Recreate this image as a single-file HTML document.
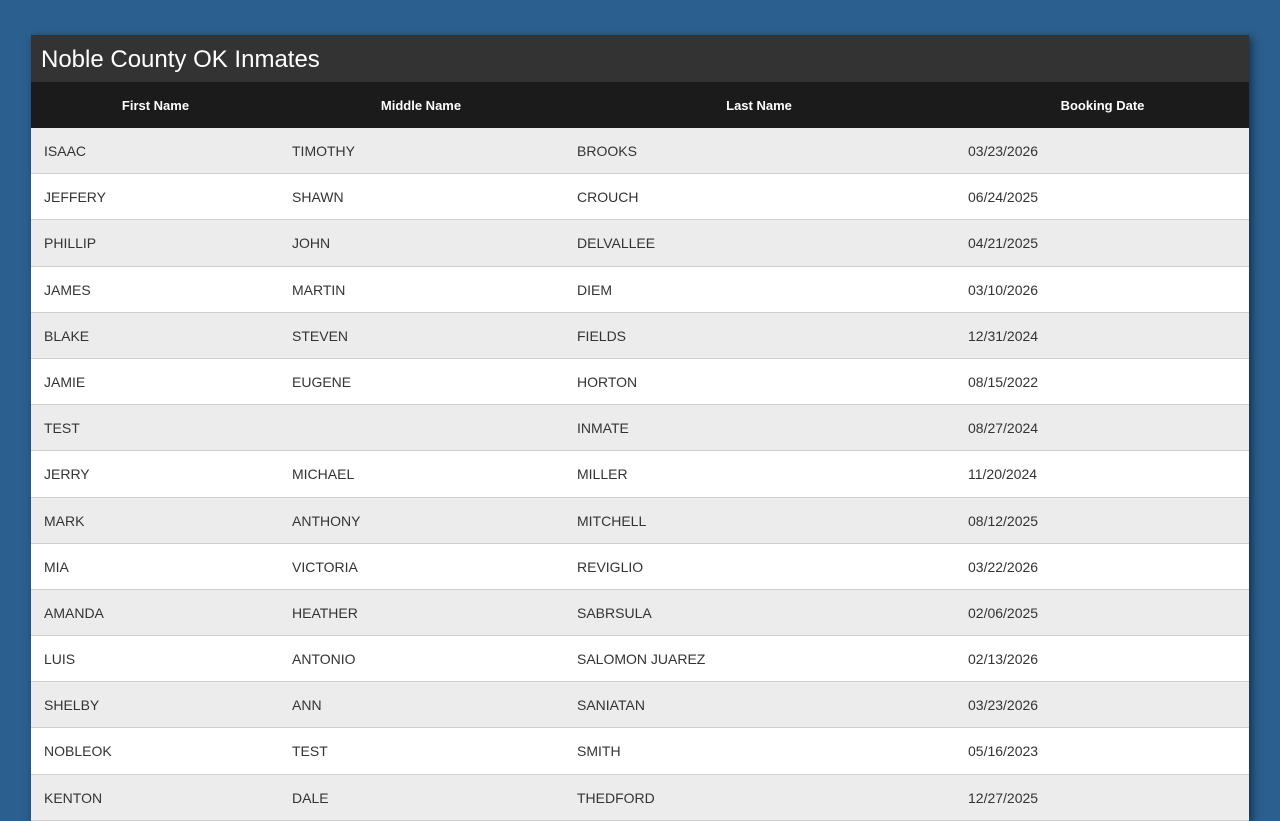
<!DOCTYPE html>
<html><head><meta charset="utf-8"><style>
html,body{margin:0;padding:0;width:1280px;height:800px;overflow:hidden;background:#2a5f8f;font-family:"Liberation Sans",Arial,sans-serif;}
.panel{position:absolute;left:31px;top:35px;width:1218px;background:#fff;box-shadow:3px 3px 8px rgba(0,0,0,0.5);}
.title{height:47px;background:#333;color:#fff;font-size:24px;line-height:50px;padding-left:10px;}
.hdr{height:46px;background:#1b1b1b;color:#fff;font-weight:bold;font-size:13px;position:relative;}
.hdr span{position:absolute;top:1px;line-height:46px;text-align:center;}
.row{height:45.2px;border-bottom:1px solid #cfcfcf;position:relative;font-size:14px;color:#333;background:#fff;}
.row:nth-child(odd){background:#ececec;}
.row span{position:absolute;top:1px;line-height:45px;}
</style></head><body>
<div class="panel">
<div class="title">Noble County OK Inmates</div>
<div class="hdr"><span style="left:0;width:249px">First Name</span><span style="left:249px;width:282px">Middle Name</span><span style="left:531px;width:394px">Last Name</span><span style="left:925px;width:293px">Booking Date</span></div>
<div>
<div class="row"><span style="left:13px">ISAAC</span><span style="left:261px">TIMOTHY</span><span style="left:546px">BROOKS</span><span style="left:937px">03/23/2026</span></div>
<div class="row"><span style="left:13px">JEFFERY</span><span style="left:261px">SHAWN</span><span style="left:546px">CROUCH</span><span style="left:937px">06/24/2025</span></div>
<div class="row"><span style="left:13px">PHILLIP</span><span style="left:261px">JOHN</span><span style="left:546px">DELVALLEE</span><span style="left:937px">04/21/2025</span></div>
<div class="row"><span style="left:13px">JAMES</span><span style="left:261px">MARTIN</span><span style="left:546px">DIEM</span><span style="left:937px">03/10/2026</span></div>
<div class="row"><span style="left:13px">BLAKE</span><span style="left:261px">STEVEN</span><span style="left:546px">FIELDS</span><span style="left:937px">12/31/2024</span></div>
<div class="row"><span style="left:13px">JAMIE</span><span style="left:261px">EUGENE</span><span style="left:546px">HORTON</span><span style="left:937px">08/15/2022</span></div>
<div class="row"><span style="left:13px">TEST</span><span style="left:261px"></span><span style="left:546px">INMATE</span><span style="left:937px">08/27/2024</span></div>
<div class="row"><span style="left:13px">JERRY</span><span style="left:261px">MICHAEL</span><span style="left:546px">MILLER</span><span style="left:937px">11/20/2024</span></div>
<div class="row"><span style="left:13px">MARK</span><span style="left:261px">ANTHONY</span><span style="left:546px">MITCHELL</span><span style="left:937px">08/12/2025</span></div>
<div class="row"><span style="left:13px">MIA</span><span style="left:261px">VICTORIA</span><span style="left:546px">REVIGLIO</span><span style="left:937px">03/22/2026</span></div>
<div class="row"><span style="left:13px">AMANDA</span><span style="left:261px">HEATHER</span><span style="left:546px">SABRSULA</span><span style="left:937px">02/06/2025</span></div>
<div class="row"><span style="left:13px">LUIS</span><span style="left:261px">ANTONIO</span><span style="left:546px">SALOMON JUAREZ</span><span style="left:937px">02/13/2026</span></div>
<div class="row"><span style="left:13px">SHELBY</span><span style="left:261px">ANN</span><span style="left:546px">SANIATAN</span><span style="left:937px">03/23/2026</span></div>
<div class="row"><span style="left:13px">NOBLEOK</span><span style="left:261px">TEST</span><span style="left:546px">SMITH</span><span style="left:937px">05/16/2023</span></div>
<div class="row"><span style="left:13px">KENTON</span><span style="left:261px">DALE</span><span style="left:546px">THEDFORD</span><span style="left:937px">12/27/2025</span></div>
</div>
</div>
</body></html>
